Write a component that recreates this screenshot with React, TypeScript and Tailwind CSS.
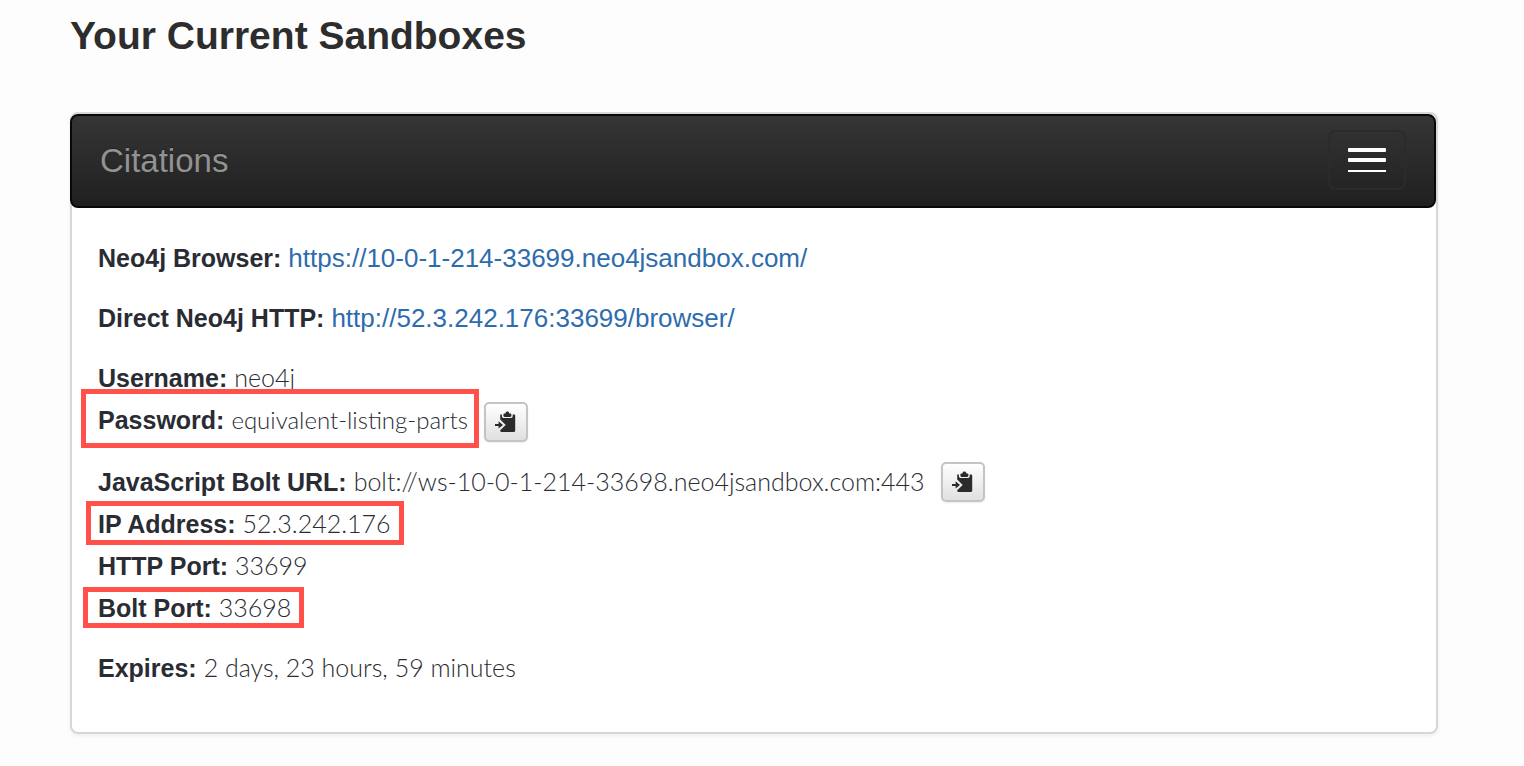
import type { ReactNode } from "react";

function PasteIcon() {
  return (
    <svg width="22" height="24" viewBox="0 0 22 24" aria-hidden="true">
      <path
        fill="#2b2b2b"
        d="M5.200 4.500h1.700v1.400c0 1.300.9 2.200 2.200 2.200h6.400c1.300 0 2.200-.9 2.200-2.200V4.500h1.300c.7 0 1.200.5 1.200 1.200v15.100c0 .7-.5 1.200-1.200 1.200H6.400c-.7 0-1.200-.5-1.200-1.200v-.6l5.500-5.300-5.500-5.300z"
      />
      <path
        fill="#2b2b2b"
        d="M8.400 4.600c0-.7.500-1.100 1.200-1.100h.8C10.700 2.200 11.400 1.600 12.400 1.600s1.700.6 2 1.900h.8c.7 0 1.200.4 1.200 1.100v1.100c0 .7-.5 1.200-1.200 1.200H9.600c-.7 0-1.200-.5-1.200-1.200z"
      />
      <path fill="#2b2b2b" d="M0 13.900h3.600v-2.700l4.400 3.700-4.400 3.700v-2.700H0z" />
    </svg>
  );
}

function CopyButton({ label }: { label: string }) {
  return (
    <button
      type="button"
      aria-label={label}
      className="ml-4 flex h-10 w-11 shrink-0 items-center justify-center self-end rounded-[5px] border-2 border-[#c4c4c4] bg-linear-to-b from-white to-[#e0e0e0] shadow-[0_1px_2px_rgba(0,0,0,0.08)]"
    >
      <PasteIcon />
    </button>
  );
}

function Field({
  label,
  value,
  frame,
  children,
}: {
  label: string;
  value: ReactNode;
  frame?: string;
  children?: ReactNode;
}) {
  return (
    <div className="flex">
      <div className="relative h-[42px] whitespace-nowrap">
        <dt className="inline font-bold">{label}:</dt>{" "}
        <dd className="inline font-['Lato',sans-serif] font-light">{value}</dd>
        {frame && <span className={`pointer-events-none absolute border-[5px] border-[#ff5049] ${frame}`} />}
      </div>
      {children}
    </div>
  );
}

function SiteLink({ href }: { href: string }) {
  return (
    <a href={href} className="font-['Liberation_Sans',sans-serif] text-[26px] font-normal text-[#2e6cad]">
      {href}
    </a>
  );
}

export default function App() {
  return (
    <main className="min-h-screen bg-[#fdfdfd] pr-[86px] pb-8 pl-[70px] font-['Liberation_Sans',Arial,sans-serif] text-[#292c33]">
      <h1 className="pt-3 text-[39px] leading-[48px] font-bold text-[#2d2d2d]">Your Current Sandboxes</h1>
      <section className="mt-[52px] rounded-lg border-2 border-[#d7d7d7] bg-white shadow-[0_2px_4px_rgba(0,0,0,0.06)]">
        <header className="-ml-0.5 flex h-[94px] items-center justify-between rounded-lg border-2 border-[#080808] bg-linear-to-b from-[#353535] to-[#202020] px-7 pb-0.5">
          <h2 className="pt-0.5 text-[33px] leading-10 text-[#929292] [text-shadow:0_-1px_0_rgba(0,0,0,0.25)]">
            Citations
          </h2>
          <button
            type="button"
            aria-label="Toggle menu"
            className="flex h-[60px] w-[78px] flex-col items-center justify-center rounded-lg border-2 border-[#2b2b2b]"
          >
            <span className="h-1 w-[38px] rounded-[1px] bg-white" />
            <span className="mt-1.5 h-1 w-[38px] rounded-[1px] bg-white" />
            <span className="mt-2 h-0.5 w-[38px] bg-white" />
          </button>
        </header>
        <dl className="flex flex-col gap-[18px] px-[26px] pt-7 pb-11 text-[25px] leading-[42px]">
          <Field label="Neo4j Browser" value={<SiteLink href="https://10-0-1-214-33699.neo4jsandbox.com/" />} />
          <Field label="Direct Neo4j HTTP" value={<SiteLink href="http://52.3.242.176:33699/browser/" />} />
          <div>
            <Field label="Username" value="neo4j" />
            <div className="flex h-11">
              <Field
                label="Password"
                value={<span className="text-[24px]">equivalent-listing-parts</span>}
                frame="-top-[9px] -right-[11px] -bottom-2 -left-[17px]"
              >
                <CopyButton label="Copy password" />
              </Field>
            </div>
          </div>
          <div>
            <Field label="JavaScript Bolt URL" value="bolt://ws-10-0-1-214-33698.neo4jsandbox.com:443">
              <CopyButton label="Copy Bolt URL" />
            </Field>
            <Field label="IP Address" value="52.3.242.176" frame="-top-px -right-[13px] -bottom-px -left-3" />
            <Field label="HTTP Port" value="33699" />
            <Field label="Bolt Port" value="33698" frame="top-px -right-[13px] bottom-0 -left-[15px]" />
          </div>
          <Field label="Expires" value="2 days, 23 hours, 59 minutes" />
        </dl>
      </section>
    </main>
  );
}
